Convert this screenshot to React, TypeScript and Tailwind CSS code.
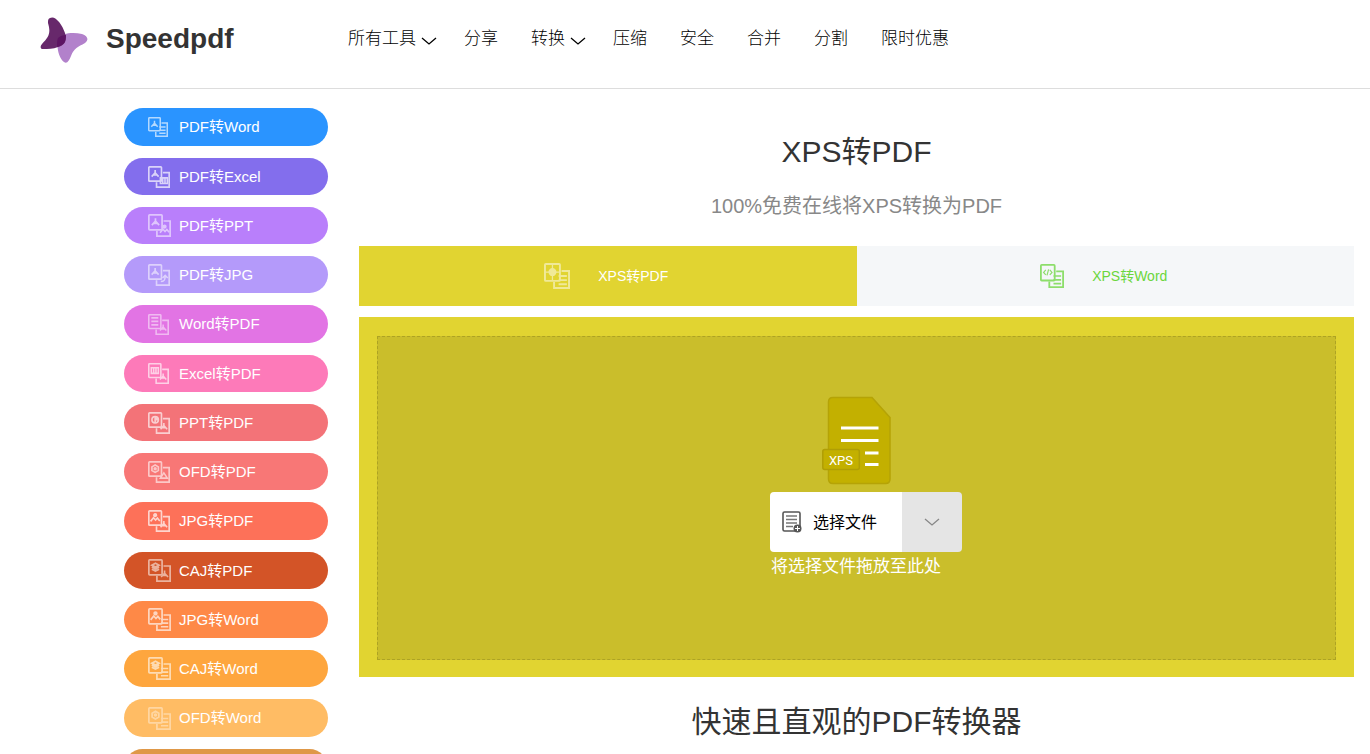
import React from "react";
import clsx from "clsx";

type Glyph = "acrobat" | "triangle" | "lines" | "sheet" | "pie" | "hex" | "image" | "stack" | "arrow" | "code" | "cross";

type Tool = {
  label: string;
  bg: string;
  from: Glyph;
  to: Glyph;
  icon: string;
};

const tools: Tool[] = [
  { label: "PDF转Word", bg: "bg-[#2a94ff]", from: "acrobat", to: "lines", icon: "size-5 opacity-65" },
  { label: "PDF转Excel", bg: "bg-[#836eed]", from: "acrobat", to: "sheet", icon: "size-[22px] opacity-70" },
  { label: "PDF转PPT", bg: "bg-[#b97ffb]", from: "acrobat", to: "image", icon: "size-[23px] opacity-55" },
  { label: "PDF转JPG", bg: "bg-[#b49afa]", from: "acrobat", to: "arrow", icon: "size-[22px] opacity-55" },
  { label: "Word转PDF", bg: "bg-[#e274e4]", from: "lines", to: "acrobat", icon: "size-[21px] opacity-50" },
  { label: "Excel转PDF", bg: "bg-[#fd7ab9]", from: "sheet", to: "acrobat", icon: "size-[21px] opacity-65" },
  { label: "PPT转PDF", bg: "bg-[#f37378]", from: "pie", to: "acrobat", icon: "size-[22px] opacity-65" },
  { label: "OFD转PDF", bg: "bg-[#f87776]", from: "hex", to: "triangle", icon: "size-[22px] opacity-60" },
  { label: "JPG转PDF", bg: "bg-[#fd7159]", from: "image", to: "acrobat", icon: "size-[22px] opacity-70" },
  { label: "CAJ转PDF", bg: "bg-[#d35427]", from: "stack", to: "acrobat", icon: "size-[23px] opacity-55" },
  { label: "JPG转Word", bg: "bg-[#fe8947]", from: "image", to: "lines", icon: "size-[23px] opacity-65" },
  { label: "CAJ转Word", bg: "bg-[#fea63e]", from: "stack", to: "lines", icon: "size-[23px] opacity-60" },
  { label: "OFD转Word", bg: "bg-[#ffbc64]", from: "hex", to: "lines", icon: "size-[23px] opacity-40" },
  { label: "XPS转Word", bg: "bg-[#df9848]", from: "code", to: "lines", icon: "size-[23px] opacity-60" },
];

const navItems = [
  { label: "所有工具", menu: true },
  { label: "分享" },
  { label: "转换", menu: true },
  { label: "压缩" },
  { label: "安全" },
  { label: "合并" },
  { label: "分割" },
  { label: "限时优惠" },
];

// every glyph is drawn around 0,0 inside a 9x9 area
const glyphs: Record<Glyph, React.ReactNode> = {
  acrobat: <path d="M0-4V-1L-3.8 3.2M0-1l3.8 4.2M-2 1.4h4" />,
  triangle: <path d="M0-3 4 3H-4Z" />,
  lines: <path d="M-4-4h8M-4 0h8M-4 4h8" />,
  sheet: <path d="M-4-3h8v6.500h-8ZM-1.300-3V3.500M1.300-3V3.500" />,
  pie: (
    <>
      <circle r="3.5" />
      <path d="M0-3.5v7M0 0h3.5M0-1.800h3" />
    </>
  ),
  hex: (
    <>
      <path d="M0-4 3.5-2v4L0 4l-3.5-2v-4Z" />
      <circle r="1" />
    </>
  ),
  image: (
    <>
      <circle cx="0" cy="-2.8" r="1.4" fill="currentColor" />
      <path d="m-5 4 3.2-4L.5 2.6 2.5.4 5 3.5" />
    </>
  ),
  stack: <path d="M0-4 3.8-2 0 0l-3.8-2ZM-3.8 0 0 2 3.8 0M-3.8 2.2 0 4.2l3.8-2" />,
  arrow: <path d="M-3.5 3.5C1 3.500 1.500 1 1.500-2.500M-1.500-.5 1.500-3.500 4.500-.5" />,
  code: <path d="m-2-2.500L-4.200 0-2 2.500M2-2.500 4.200 0 2 2.500M.8-3-.8 3" strokeWidth="1.200" />,
  cross: (
    <>
      <circle r="2.8" fill="currentColor" />
      <path d="M0-7V8M-6.5 0h13" strokeWidth="1.200" />
    </>
  ),
};

function ConvertIcon({ from, to, className }: { from: Glyph; to: Glyph; className?: string }) {
  return (
    <svg viewBox="0 0 24 24" fill="none" stroke="currentColor" strokeWidth="1.8" className={className} aria-hidden="true">
      <rect x="0.9" y="0.9" width="13.8" height="15.6" rx="0.8" />
      <path d="M16.2 7.300h6.900v15.800H9.300v-5.500" />
      <g transform="translate(7.8 8.4)">{glyphs[from]}</g>
      <g transform="translate(17.300 15.800) scale(.95)">{glyphs[to]}</g>
    </svg>
  );
}

function Chevron({ className }: { className?: string }) {
  return (
    <svg viewBox="0 0 16 8" fill="none" stroke="currentColor" strokeWidth="1.3" className={className} aria-hidden="true">
      <path d="M1 1l7 6 7-6" />
    </svg>
  );
}

function Logo() {
  return (
    <a href="#" className="flex items-center gap-[18px] text-[28px] font-bold text-[#333]">
      <svg viewBox="0 0 48 48" className="size-12" aria-hidden="true">
        <path d="M18 22C22 17 33 16 42 18C48 20 49 24 45 27C38 31 34 32 31 40C29 45 27 48 24 46C19 42 16 31 18 22Z" fill="#b281cb" />
        <path d="M10 2C15-1 22 8 25 17C27 25 25 29 18 31C13 33 8 33 3 33C0 33 0 30 2 28C9 21 11 17 8 7C8 4 8 3 10 2Z" fill="#67286b" />
        <path d="M18 22C20 20 23 19 26 19C26 26 24 29 17 31C17 27 17 24 18 22Z" fill="#5d1463" />
      </svg>
      <span className="pb-0.5">Speedpdf</span>
    </a>
  );
}

function Header() {
  return (
    <header className="flex h-[89px] items-start border-b border-[#ddd] pl-10">
      <div className="w-[308px] shrink-0 pt-4">
        <Logo />
      </div>
      <nav className="flex gap-[33px] pt-[27px] text-[17px] leading-6 font-light whitespace-nowrap text-black">
        {navItems.map((item) =>
          item.menu ? (
            <button key={item.label} type="button" className="-mr-1.5 flex items-center gap-[5px]">
              {item.label}
              <Chevron className="mt-1 h-2 w-4" />
            </button>
          ) : (
            <a key={item.label} href="#">
              {item.label}
            </a>
          )
        )}
      </nav>
    </header>
  );
}

function Sidebar() {
  return (
    <aside className="flex w-[204px] shrink-0 flex-col gap-3 pt-[19px]">
      {tools.map((tool) => (
        <a
          key={tool.label}
          href="#"
          className={clsx("flex h-[37px] items-center rounded-full pl-6 text-[15px] text-white nth-[4n+1]:h-[38px]", tool.bg)}
        >
          <span className="w-[31px]">
            <ConvertIcon from={tool.from} to={tool.to} className={tool.icon} />
          </span>
          <span className="pt-px">{tool.label}</span>
        </a>
      ))}
    </aside>
  );
}

function XpsFile() {
  return (
    <svg viewBox="0 0 70 90" className="h-[90px] w-[70px]" role="img" aria-label="XPS">
      <path d="M11 2.500H50L68 22.500V84Q68 88.500 63.500 88.500H11Q6.500 88.500 6.500 84V7Q6.500 2.500 11 2.500Z" fill="#c3b000" stroke="#b5a306" strokeWidth="1.500" />
      <path d="M19 33h37.500M19 45.500h37.500M43 58h13.500M43 69.500h13.500" stroke="#fff" strokeWidth="3" />
      <rect x="0.800" y="54.500" width="36.500" height="20" rx="2" fill="#c3b000" stroke="#b09e05" strokeWidth="1.500" />
      <text x="19" y="69.500" textAnchor="middle" fontSize="13" fill="#fff" fontFamily="Roboto, sans-serif">
        XPS
      </text>
    </svg>
  );
}

function FileListIcon() {
  return (
    <svg viewBox="0 0 20 22" fill="none" className="h-[22px] w-5" aria-hidden="true">
      <rect x="1" y="1" width="17" height="19" rx="1.500" stroke="#555" strokeWidth="1.600" />
      <path d="M4 5h11M4 8.500h11M4 12h11M4 15.500h7" stroke="#777" strokeWidth="1.300" />
      <circle cx="15.500" cy="17.500" r="4" fill="#555" />
      <path d="M13 17.500h5M15.500 15v5" stroke="#fff" />
    </svg>
  );
}

function DropZone() {
  return (
    <section className="mt-[11px] bg-[#e1d431] px-[18px] pt-[19px] pb-[17px]">
      <div className="flex flex-col items-center border border-dashed border-[#ada324] bg-[#cabe2b] pt-[58px] pb-20">
        <XpsFile />
        <div className="mt-[7px] pl-[19px]">
          <div className="flex h-[60px]">
            <button type="button" className="flex w-[132px] items-center gap-[11px] rounded-l bg-white pl-3 text-base text-black">
              <FileListIcon />
              <span className="pt-0.5">选择文件</span>
            </button>
            <button type="button" aria-label="更多" className="flex w-[60px] items-center justify-center rounded-r-sm bg-[#e5e5e5] text-[#888]">
              <Chevron className="h-2 w-4" />
            </button>
          </div>
          <p className="pt-0.5 pl-px text-[17px] leading-[25px] text-white">将选择文件拖放至此处</p>
        </div>
      </div>
    </section>
  );
}

function App() {
  return (
    <div className="bg-white font-['Liberation_Sans','Noto_Sans_CJK_SC',sans-serif]">
      <Header />
      <div className="flex gap-[31px] pr-4 pl-[124px]">
        <Sidebar />
        <main className="min-w-0 flex-1">
          <h1 className="pt-[43px] text-center text-[30px] leading-10 text-[#333]">XPS转PDF</h1>
          <p className="pt-5 text-center text-xl leading-7 text-[#888]">100%免费在线将XPS转换为PDF</p>
          <div className="mt-[26px] grid h-[60px] grid-cols-2 text-sm">
            <button type="button" className="flex items-center justify-center gap-7 bg-[#e1d431] pr-[3px] text-white">
              <ConvertIcon from="cross" to="lines" className="size-[26px] opacity-50" />
              XPS转PDF
            </button>
            <button type="button" className="flex items-center justify-center gap-7 bg-[#f5f7f9] pr-[3px] text-[#6bd63c]">
              <ConvertIcon from="code" to="lines" className="size-6 opacity-75" />
              XPS转Word
            </button>
          </div>
          <DropZone />
          <h2 className="pt-[25px] text-center text-[30px] leading-10 text-[#333]">快速且直观的PDF转换器</h2>
        </main>
      </div>
    </div>
  );
}

export default App;
